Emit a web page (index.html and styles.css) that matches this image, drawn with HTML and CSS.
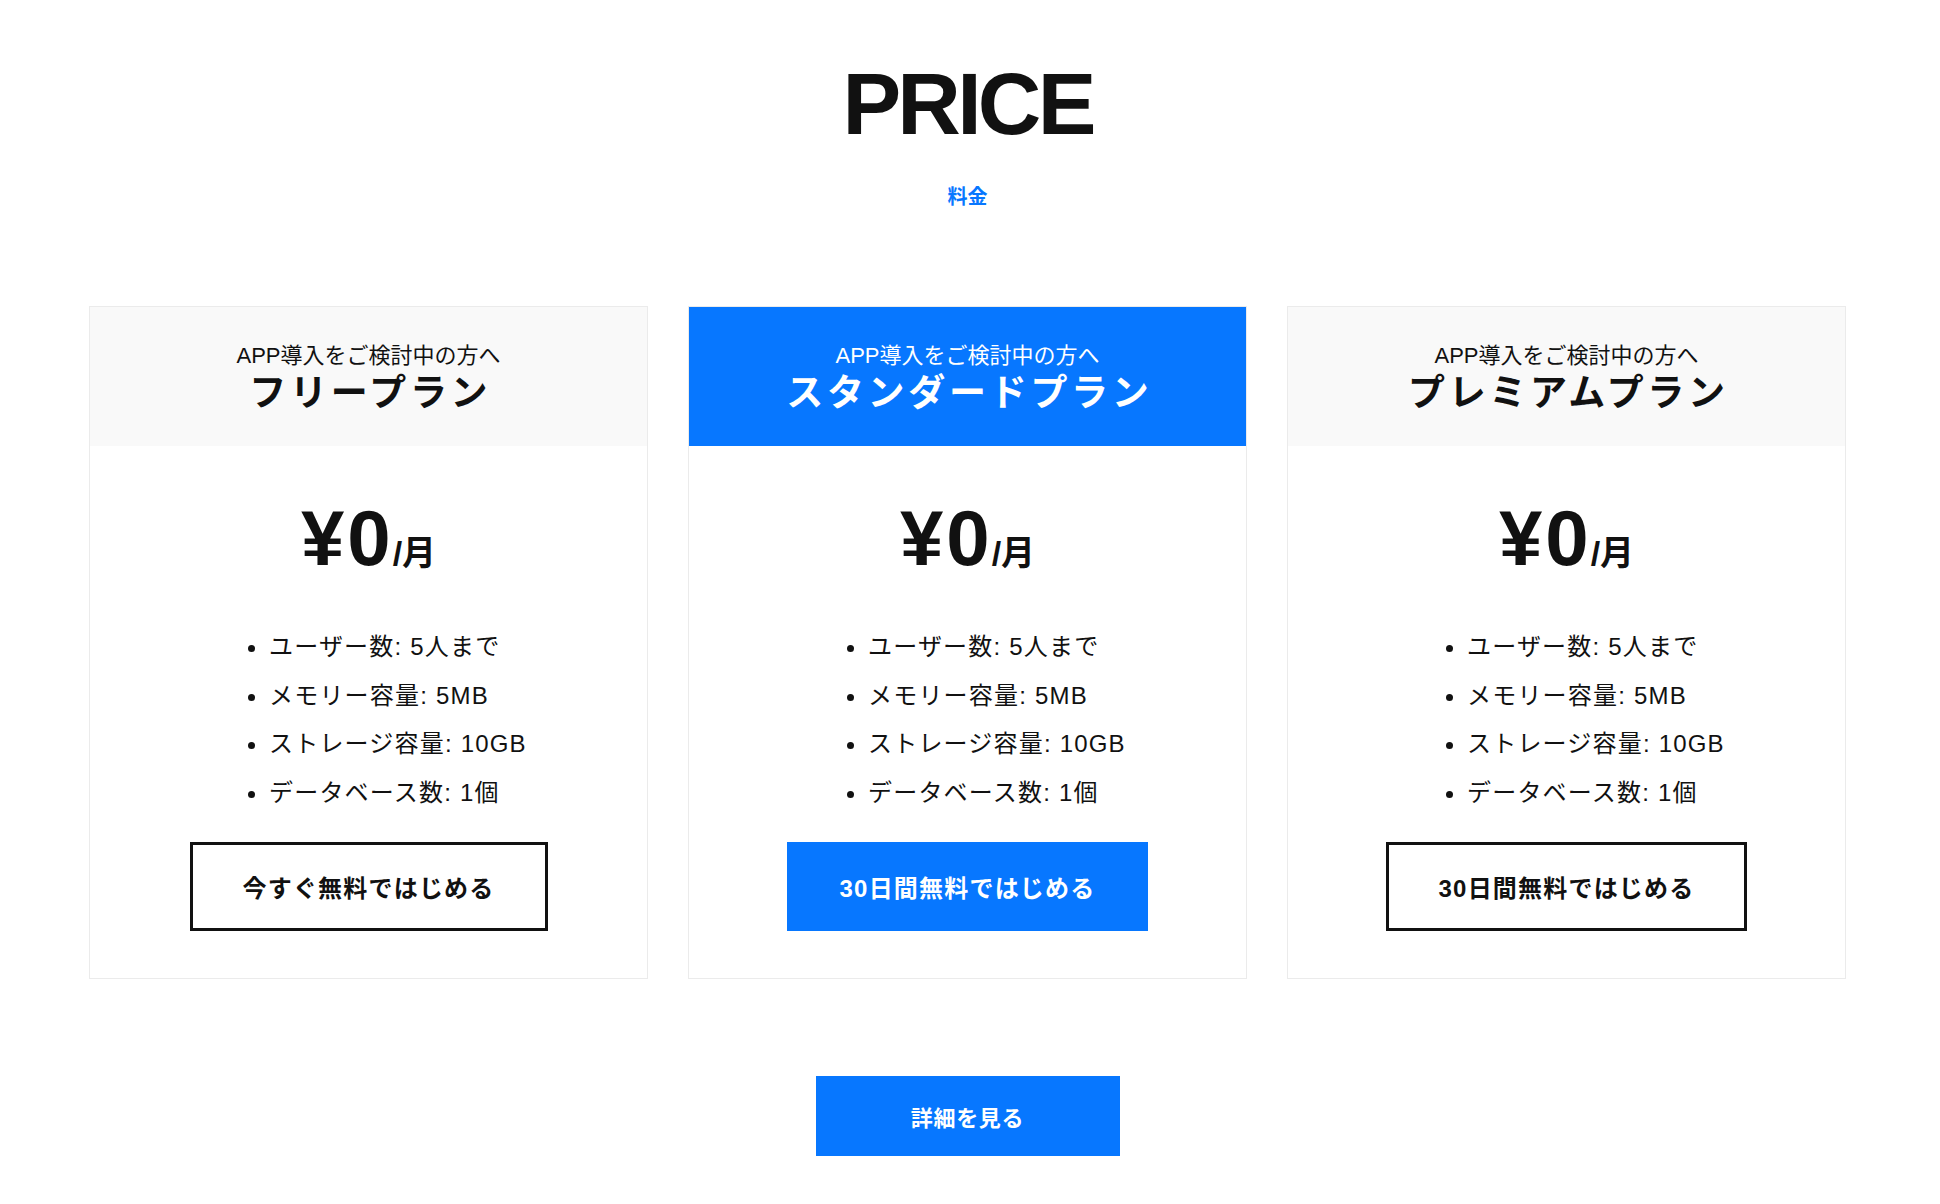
FILE: index.html
```html
<!DOCTYPE html>
<html lang="ja">
<head>
<meta charset="utf-8">
<title>PRICE</title>
<link rel="stylesheet" href="styles.css">
</head>
<body>
<section class="price-section">
  <h2 class="section-title">PRICE</h2>
  <p class="section-sub">料金</p>

  <div class="plans">
    <div class="plan">
      <div class="plan-head">
        <p class="plan-lead">APP導入をご検討中の方へ</p>
        <p class="plan-name">フリープラン</p>
      </div>
      <div class="plan-body">
        <p class="plan-price"><span class="yen">¥</span><span class="amount">0</span><span class="unit">/月</span></p>
        <ul class="plan-features">
          <li>ユーザー数: 5人まで</li>
          <li>メモリー容量: 5MB</li>
          <li>ストレージ容量: 10GB</li>
          <li>データベース数: 1個</li>
        </ul>
        <a class="btn btn-outline" href="#">今すぐ無料ではじめる</a>
      </div>
    </div>

    <div class="plan plan-featured">
      <div class="plan-head">
        <p class="plan-lead">APP導入をご検討中の方へ</p>
        <p class="plan-name">スタンダードプラン</p>
      </div>
      <div class="plan-body">
        <p class="plan-price"><span class="yen">¥</span><span class="amount">0</span><span class="unit">/月</span></p>
        <ul class="plan-features">
          <li>ユーザー数: 5人まで</li>
          <li>メモリー容量: 5MB</li>
          <li>ストレージ容量: 10GB</li>
          <li>データベース数: 1個</li>
        </ul>
        <a class="btn btn-fill" href="#">30日間無料ではじめる</a>
      </div>
    </div>

    <div class="plan">
      <div class="plan-head">
        <p class="plan-lead">APP導入をご検討中の方へ</p>
        <p class="plan-name">プレミアムプラン</p>
      </div>
      <div class="plan-body">
        <p class="plan-price"><span class="yen">¥</span><span class="amount">0</span><span class="unit">/月</span></p>
        <ul class="plan-features">
          <li>ユーザー数: 5人まで</li>
          <li>メモリー容量: 5MB</li>
          <li>ストレージ容量: 10GB</li>
          <li>データベース数: 1個</li>
        </ul>
        <a class="btn btn-outline" href="#">30日間無料ではじめる</a>
      </div>
    </div>
  </div>

  <div class="more">
    <a class="more-btn" href="#">詳細を見る</a>
  </div>
</section>
</body>
</html>
```

FILE: styles.css
```css
* { box-sizing: border-box; }

html, body {
  margin: 0;
  padding: 0;
  background: #ffffff;
}

body {
  font-family: "Liberation Sans", "Noto Sans CJK JP", sans-serif;
  color: #111111;
}

p { margin: 0; }

.price-section {
  padding-top: 60px;
  padding-right: 5px;
  display: flex;
  flex-direction: column;
  align-items: center;
}

.section-title {
  margin: 0;
  font-size: 88px;
  line-height: 88px;
  font-weight: 700;
  letter-spacing: -3.75px;
  color: #111111;
}

.section-sub {
  margin-top: 34px;
  font-size: 20px;
  line-height: 30px;
  font-weight: 700;
  color: #0777ff;
}

.plans {
  margin-top: 94px;
  width: 1757px;
  display: grid;
  grid-template-columns: repeat(3, 1fr);
  gap: 40px;
}

.plan {
  border: 1px solid #ebebeb;
  display: flex;
  flex-direction: column;
}

.plan-head {
  height: 139px;
  padding-top: 36px;
  background: #f9f9f9;
  display: flex;
  flex-direction: column;
  align-items: center;
  gap: 3px;
  color: #111111;
}

.plan-featured .plan-head {
  background: #0777ff;
  color: #ffffff;
}

.plan-lead {
  font-size: 22px;
  line-height: 26px;
}

.plan-name {
  font-size: 37px;
  line-height: 44px;
  font-weight: 700;
  letter-spacing: 0.1em;
  margin-right: -0.1em;
}

.plan-body {
  padding: 55px 0 47px;
  display: flex;
  flex-direction: column;
  align-items: center;
}

.plan-price {
  font-size: 78px;
  font-weight: 700;
  line-height: 74px;
}

.plan-price .yen {
  margin-right: 3px;
}

.plan-price .amount {
  margin-right: 2px;
}

.plan-price .unit {
  font-size: 34px;
  line-height: 1;
}

.plan-features {
  align-self: stretch;
  margin: 48px 0 0;
  padding: 0 0 0 179px;
  list-style: disc;
  font-size: 24px;
  line-height: 48.6px;
  letter-spacing: 0.05em;
  color: #111111;
}

.btn {
  margin-top: 25px;
  height: 89px;
  padding: 0 50px;
  display: inline-flex;
  align-items: center;
  justify-content: center;
  font-size: 24px;
  font-weight: 700;
  letter-spacing: 0.05em;
  text-decoration: none;
  border: 3px solid #111111;
}

.btn-outline {
  color: #111111;
  background: #ffffff;
}

.btn-fill {
  color: #ffffff;
  background: #0777ff;
  border-color: #0777ff;
}

.more {
  margin-top: 97px;
  padding-bottom: 47px;
}

.more-btn {
  width: 304px;
  height: 80px;
  display: flex;
  align-items: center;
  justify-content: center;
  background: #0777ff;
  color: #ffffff;
  font-size: 22px;
  font-weight: 700;
  letter-spacing: 0.03em;
  text-decoration: none;
}
```
